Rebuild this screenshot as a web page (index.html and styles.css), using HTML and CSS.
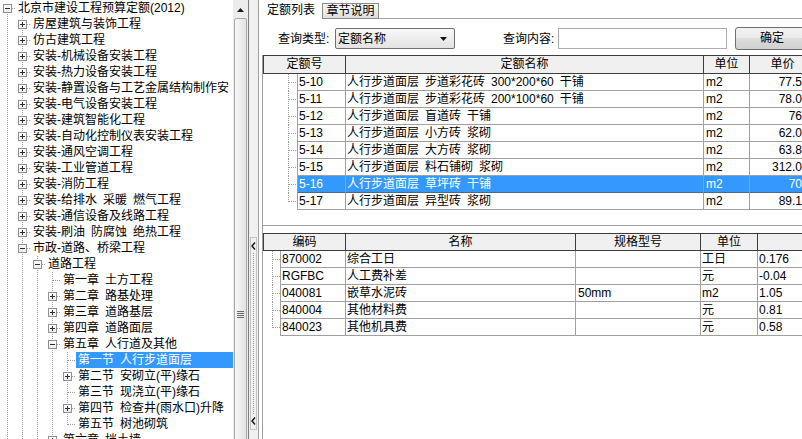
FILE: index.html
```html
<!DOCTYPE html>
<html lang="zh-CN">
<head>
<meta charset="utf-8">
<title>北京市建设工程预算定额</title>
<link rel="stylesheet" href="styles.css">
</head>
<body>
<div class="app">
  <div class="left">
    <div class="tree">
      <div class="row"><span class="c f"><i class="bx minus"></i></span><span class="lbl">北京市建设工程预算定额(2012)</span></div>
      <div class="row"><span class="g v"></span><span class="c t"><i class="bx plus"></i></span><span class="lbl">房屋建筑与装饰工程</span></div>
      <div class="row"><span class="g v"></span><span class="c t"><i class="bx plus"></i></span><span class="lbl">仿古建筑工程</span></div>
      <div class="row"><span class="g v"></span><span class="c t"><i class="bx plus"></i></span><span class="lbl">安装-机械设备安装工程</span></div>
      <div class="row"><span class="g v"></span><span class="c t"><i class="bx plus"></i></span><span class="lbl">安装-热力设备安装工程</span></div>
      <div class="row"><span class="g v"></span><span class="c t"><i class="bx plus"></i></span><span class="lbl">安装-静置设备与工艺金属结构制作安</span></div>
      <div class="row"><span class="g v"></span><span class="c t"><i class="bx plus"></i></span><span class="lbl">安装-电气设备安装工程</span></div>
      <div class="row"><span class="g v"></span><span class="c t"><i class="bx plus"></i></span><span class="lbl">安装-建筑智能化工程</span></div>
      <div class="row"><span class="g v"></span><span class="c t"><i class="bx plus"></i></span><span class="lbl">安装-自动化控制仪表安装工程</span></div>
      <div class="row"><span class="g v"></span><span class="c t"><i class="bx plus"></i></span><span class="lbl">安装-通风空调工程</span></div>
      <div class="row"><span class="g v"></span><span class="c t"><i class="bx plus"></i></span><span class="lbl">安装-工业管道工程</span></div>
      <div class="row"><span class="g v"></span><span class="c t"><i class="bx plus"></i></span><span class="lbl">安装-消防工程</span></div>
      <div class="row"><span class="g v"></span><span class="c t"><i class="bx plus"></i></span><span class="lbl">安装-给排水&ensp;采暖&ensp;燃气工程</span></div>
      <div class="row"><span class="g v"></span><span class="c t"><i class="bx plus"></i></span><span class="lbl">安装-通信设备及线路工程</span></div>
      <div class="row"><span class="g v"></span><span class="c t"><i class="bx plus"></i></span><span class="lbl">安装-刷油&ensp;防腐蚀&ensp;绝热工程</span></div>
      <div class="row"><span class="g v"></span><span class="c t"><i class="bx minus"></i></span><span class="lbl">市政-道路、桥梁工程</span></div>
      <div class="row"><span class="g v"></span><span class="g v"></span><span class="c t"><i class="bx minus"></i></span><span class="lbl">道路工程</span></div>
      <div class="row"><span class="g v"></span><span class="g v"></span><span class="g v"></span><span class="c t"></span><span class="lbl">第一章&ensp;土方工程</span></div>
      <div class="row"><span class="g v"></span><span class="g v"></span><span class="g v"></span><span class="c t"><i class="bx plus"></i></span><span class="lbl">第二章&ensp;路基处理</span></div>
      <div class="row"><span class="g v"></span><span class="g v"></span><span class="g v"></span><span class="c t"><i class="bx plus"></i></span><span class="lbl">第三章&ensp;道路基层</span></div>
      <div class="row"><span class="g v"></span><span class="g v"></span><span class="g v"></span><span class="c t"><i class="bx plus"></i></span><span class="lbl">第四章&ensp;道路面层</span></div>
      <div class="row"><span class="g v"></span><span class="g v"></span><span class="g v"></span><span class="c t"><i class="bx minus"></i></span><span class="lbl">第五章&ensp;人行道及其他</span></div>
      <div class="row"><span class="g v"></span><span class="g v"></span><span class="g v"></span><span class="g v"></span><span class="c t"></span><span class="lbl sel">第一节&ensp;人行步道面层</span></div>
      <div class="row"><span class="g v"></span><span class="g v"></span><span class="g v"></span><span class="g v"></span><span class="c t"><i class="bx plus"></i></span><span class="lbl">第二节&ensp;安砌立(平)缘石</span></div>
      <div class="row"><span class="g v"></span><span class="g v"></span><span class="g v"></span><span class="g v"></span><span class="c t"></span><span class="lbl">第三节&ensp;现浇立(平)缘石</span></div>
      <div class="row"><span class="g v"></span><span class="g v"></span><span class="g v"></span><span class="g v"></span><span class="c t"><i class="bx plus"></i></span><span class="lbl">第四节&ensp;检查井(雨水口)升降</span></div>
      <div class="row"><span class="g v"></span><span class="g v"></span><span class="g v"></span><span class="g v"></span><span class="c l"></span><span class="lbl">第五节&ensp;树池砌筑</span></div>
      <div class="row"><span class="g v"></span><span class="g v"></span><span class="g v"></span><span class="c t"><i class="bx plus"></i></span><span class="lbl">第六章&ensp;挡土墙</span></div>
    </div>
    <div class="vscroll">
      <div class="sb-btn"><svg width="7" height="4" viewBox="0 0 7 4"><path d="M3.5 0L7 4H0z" fill="#1a1a1a"/></svg></div>
      <div class="sb-thumb"><div class="sb-grip"></div></div>
    </div>
  </div>

  <div class="splitter">
    <div class="split-grip">
      <svg width="5" height="8" viewBox="0 0 5 8"><path d="M4 0.5L1 4l3 3.5" fill="none" stroke="#111" stroke-width="1.4"/></svg>
      <div class="split-dots"></div>
      <svg width="5" height="8" viewBox="0 0 5 8"><path d="M4 0.5L1 4l3 3.5" fill="none" stroke="#111" stroke-width="1.4"/></svg>
    </div>
  </div>

  <div class="right">
    <div class="tabs">
      <div class="tab tab-active">定额列表</div>
      <div class="tab tab-idle">章节说明</div>
      <div class="tab-fill"></div>
    </div>

    <div class="query">
      <span class="q-lbl">查询类型:</span>
      <div class="select"><span>定额名称</span><svg width="7" height="4" viewBox="0 0 7 4"><path d="M0 0h7L3.5 4z" fill="#111"/></svg></div>
      <span class="q-lbl q-lbl2">查询内容:</span>
      <div class="input"></div>
      <div class="btn">确定</div>
    </div>

    <div class="panel top-panel">
      <div class="hrow">
        <div class="hc w-code">定额号</div>
        <div class="hc w-name">定额名称</div>
        <div class="hc w-unit">单位</div>
        <div class="hc w-price">单价</div>
      </div>
      <div class="drow"><span class="tl t"></span><span class="dc code">5-10</span><span class="dc w-name">人行步道面层&ensp;步道彩花砖&ensp;300*200*60&ensp;干铺</span><span class="dc w-unit">m2</span><span class="dc w-price num">77.5</span></div>
      <div class="drow"><span class="tl t"></span><span class="dc code">5-11</span><span class="dc w-name">人行步道面层&ensp;步道彩花砖&ensp;200*100*60&ensp;干铺</span><span class="dc w-unit">m2</span><span class="dc w-price num">78.0</span></div>
      <div class="drow"><span class="tl t"></span><span class="dc code">5-12</span><span class="dc w-name">人行步道面层&ensp;盲道砖&ensp;干铺</span><span class="dc w-unit">m2</span><span class="dc w-price num">76</span></div>
      <div class="drow"><span class="tl t"></span><span class="dc code">5-13</span><span class="dc w-name">人行步道面层&ensp;小方砖&ensp;浆砌</span><span class="dc w-unit">m2</span><span class="dc w-price num">62.0</span></div>
      <div class="drow"><span class="tl t"></span><span class="dc code">5-14</span><span class="dc w-name">人行步道面层&ensp;大方砖&ensp;浆砌</span><span class="dc w-unit">m2</span><span class="dc w-price num">63.8</span></div>
      <div class="drow"><span class="tl t"></span><span class="dc code">5-15</span><span class="dc w-name">人行步道面层&ensp;料石铺砌&ensp;浆砌</span><span class="dc w-unit">m2</span><span class="dc w-price num">312.0</span></div>
      <div class="drow sel"><span class="tl t"></span><span class="dc code">5-16</span><span class="dc w-name">人行步道面层&ensp;草坪砖&ensp;干铺</span><span class="dc w-unit">m2</span><span class="dc w-price num">70</span></div>
      <div class="drow"><span class="tl l"></span><span class="dc code">5-17</span><span class="dc w-name">人行步道面层&ensp;异型砖&ensp;浆砌</span><span class="dc w-unit">m2</span><span class="dc w-price num">89.1</span></div>
    </div>

    <div class="panel bottom-panel">
      <div class="hrow hrow2">
        <div class="hc w-code">编码</div>
        <div class="hc w-bname">名称</div>
        <div class="hc w-spec">规格型号</div>
        <div class="hc w-bunit">单位</div>
        <div class="hc w-val"></div>
      </div>
      <div class="drow"><span class="tl2 t"></span><span class="dc code2">870002</span><span class="dc w-bname">综合工日</span><span class="dc w-spec"></span><span class="dc w-bunit">工日</span><span class="dc w-val">0.176</span></div>
      <div class="drow"><span class="tl2 t"></span><span class="dc code2">RGFBC</span><span class="dc w-bname">人工费补差</span><span class="dc w-spec"></span><span class="dc w-bunit">元</span><span class="dc w-val">-0.04</span></div>
      <div class="drow"><span class="tl2 t"></span><span class="dc code2">040081</span><span class="dc w-bname">嵌草水泥砖</span><span class="dc w-spec">50mm</span><span class="dc w-bunit">m2</span><span class="dc w-val">1.05</span></div>
      <div class="drow"><span class="tl2 t"></span><span class="dc code2">840004</span><span class="dc w-bname">其他材料费</span><span class="dc w-spec"></span><span class="dc w-bunit">元</span><span class="dc w-val">0.81</span></div>
      <div class="drow"><span class="tl2 l"></span><span class="dc code2">840023</span><span class="dc w-bname">其他机具费</span><span class="dc w-spec"></span><span class="dc w-bunit">元</span><span class="dc w-val">0.58</span></div>
    </div>
  </div>
</div>
</body>
</html>
```

FILE: styles.css
```css
* { box-sizing: border-box; }
:root {
  --dv: repeating-linear-gradient(to bottom, #9a9a9a 0 1px, transparent 1px 2px);
  --dh: repeating-linear-gradient(to right, #9a9a9a 0 1px, transparent 1px 2px);
  --grid: #a0a0a0;
  --hdr: #3c3c3c;
}
html, body { margin: 0; padding: 0; }
body {
  width: 802px;
  height: 439px;
  overflow: hidden;
  background: #fff;
  color: #000;
  font: 12px/16px "Liberation Sans", "Noto Sans CJK SC", sans-serif;
}
.app { display: flex; width: 802px; height: 439px; overflow: hidden; }

/* ---------- left tree ---------- */
.left { display: flex; width: 249px; flex: none; overflow: hidden; }
.tree { width: 233px; flex: none; overflow: hidden; background: #fff; }
.row { display: flex; height: 16px; white-space: nowrap; }
.g { width: 15px; height: 16px; flex: none; }
.g.v { background: var(--dv) 7px 0 / 1px 16px no-repeat; }
.c { width: 16px; height: 16px; flex: none; display: flex; align-items: flex-start; padding-left: 3px; }
.c.t { background: var(--dv) 7px 0 / 1px 16px no-repeat, var(--dh) 8px 8px / 8px 1px no-repeat; }
.c.l { background: var(--dv) 7px 0 / 1px 9px no-repeat, var(--dh) 8px 8px / 8px 1px no-repeat; }
.c.f { background: var(--dv) 7px 8px / 1px 8px no-repeat, var(--dh) 8px 8px / 8px 1px no-repeat; }
.lbl { padding-left: 2px; padding-right: 2px; line-height: 16px; }
.lbl.sel { flex: 1; background: #3399ff; color: #fff; }

.bx {
  display: block;
  position: relative;
  width: 9px;
  height: 9px;
  margin-top: 4px;
  border: 1px solid #8f8f8f;
  background: linear-gradient(#ffffff, #ececec);
}
.bx::before {
  content: "";
  position: absolute;
  left: 1px; top: 3px;
  width: 5px; height: 1px;
  background: #2c2c2c;
}
.bx.plus::after {
  content: "";
  position: absolute;
  left: 3px; top: 1px;
  width: 1px; height: 5px;
  background: #2c2c2c;
}

.vscroll {
  width: 16px;
  flex: none;
  display: flex;
  flex-direction: column;
  background: #ececec;
  border-right: 1px solid #7d7d7d;
  overflow: hidden;
}
.sb-btn { height: 18px; flex: none; display: flex; align-items: center; justify-content: center; padding-top: 1px; }
.sb-thumb {
  flex: none;
  height: 600px;
  margin: 0 1px;
  border: 1px solid #a9a9a9;
  border-radius: 2px;
  background: linear-gradient(to right, #f6f6f6, #e3e3e3);
  display: flex;
  justify-content: center;
  align-items: flex-start;
}
.sb-grip {
  margin-top: 292px;
  width: 7px;
  height: 7px;
  background: repeating-linear-gradient(to bottom, #6a6a6a 0 1px, transparent 1px 2px);
}

/* ---------- splitter ---------- */
.splitter {
  width: 10px;
  flex: none;
  background: #f0f0f0;
  border-right: 1px solid #a0a0a0;
  display: flex;
  flex-direction: column;
  align-items: center;
  padding-top: 237px;
}
.split-grip {
  width: 7px;
  height: 193px;
  border: 1px solid #c4c4c4;
  display: flex;
  flex-direction: column;
  align-items: center;
  padding: 4px 0;
}
.split-grip svg { flex: none; }
.split-dots {
  flex: 1;
  width: 1px;
  margin: 3px 0;
  background: repeating-linear-gradient(to bottom, #7f9db9 0 1px, transparent 1px 2px);
}

/* ---------- right ---------- */
.right { flex: 1; min-width: 0; display: flex; flex-direction: column; overflow: hidden; background: #fff; }

.tabs { display: flex; align-items: flex-end; height: 19px; padding-left: 3px; flex: none; }
.tab { flex: none; white-space: nowrap; }
.tab-active { width: 58px; height: 19px; padding-left: 5px; line-height: 20px; }
.tab-idle {
  width: 57px;
  height: 16px;
  margin-left: 2px;
  border: 1px solid #8c8c8c;
  background: linear-gradient(#f7f7f7, #dedede);
  text-align: center;
  line-height: 14px;
}
.tab-fill { flex: 1; height: 19px; border-bottom: 1px solid #a0a0a0; }

.query {
  display: flex;
  align-items: center;
  height: 23px;
  margin-top: 8px;
  padding-left: 19px;
  flex: none;
  white-space: nowrap;
}
.q-lbl { width: 57px; flex: none; }
.q-lbl2 { margin-left: 48px; width: 55px; }
.select {
  width: 120px;
  height: 21px;
  flex: none;
  border: 1px solid #707070;
  border-radius: 2px;
  background: linear-gradient(#f7f7f7, #e3e3e3);
  display: flex;
  align-items: center;
  justify-content: space-between;
  padding: 0 7px 0 2px;
}
.input { width: 169px; height: 21px; flex: none; border: 1px solid #abadb3; background: #fff; }
.btn {
  margin-left: 8px;
  width: 74px;
  height: 23px;
  flex: none;
  border: 1px solid #707070;
  border-radius: 3px;
  background: linear-gradient(#f2f2f2 0%, #ebebeb 50%, #dddddd 50%, #cfcfcf 100%);
  text-align: center;
  line-height: 21px;
}

.panel { margin-left: 3px; border-left: 1px solid var(--grid); overflow: hidden; flex: none; }
.top-panel { margin-top: 5px; height: 171px; border-bottom: 1px solid var(--grid); }
.bottom-panel { flex: 1; padding-top: 7px; }

.hrow {
  display: flex;
  height: 19px;
  width: max-content;
  border-top: 1px solid var(--hdr);
  border-left: 1px solid var(--hdr);
  border-bottom: 1px solid var(--hdr);
  background: #f0f0f0;
}
.hrow2 { height: 18px; }
.hc { flex: none; border-right: 1px solid var(--hdr); text-align: center; line-height: 16px; white-space: nowrap; }

.drow { display: flex; height: 17px; width: max-content; }
.tl, .tl2 { flex: none; height: 17px; }
.tl { width: 34px; }
.tl.t { background: var(--dv) 25px 0 / 1px 17px no-repeat, var(--dh) 26px 8px / 8px 1px no-repeat; }
.tl.l { background: var(--dv) 25px 0 / 1px 9px no-repeat, var(--dh) 26px 8px / 8px 1px no-repeat; }
.tl2 { width: 17px; }
.tl2.t { background: var(--dv) 9px 0 / 1px 17px no-repeat, var(--dh) 10px 8px / 7px 1px no-repeat; }
.tl2.l { background: var(--dv) 9px 0 / 1px 9px no-repeat, var(--dh) 10px 8px / 7px 1px no-repeat; }

.dc {
  flex: none;
  height: 17px;
  border-right: 1px solid var(--grid);
  border-bottom: 1px solid var(--grid);
  padding-left: 1px;
  line-height: 16px;
  white-space: nowrap;
  overflow: hidden;
}
.code { width: 49px; border-left: 1px solid var(--grid); }
.code2 { width: 66px; border-left: 1px solid var(--grid); }

.w-code { width: 82px; }
.w-name { width: 358px; }
.w-unit { width: 46px; }
.w-price { width: 66px; }
.num { text-align: right; padding-right: 13px; }
.dc.w-unit { padding-left: 2px; }

.w-bname { width: 230px; }
.w-spec { width: 125px; }
.dc.w-spec { padding-left: 2px; }
.w-bunit { width: 57px; }
.w-val { width: 73px; }

.drow.sel .dc { background: #3399ff; color: #fff; }
.drow.sel .dc { border-top: 0; }
.drow.sel .code, .drow.sel .w-name, .drow.sel .w-unit, .drow.sel .w-price {
  border-bottom-color: #4a6a8a;
}
```
